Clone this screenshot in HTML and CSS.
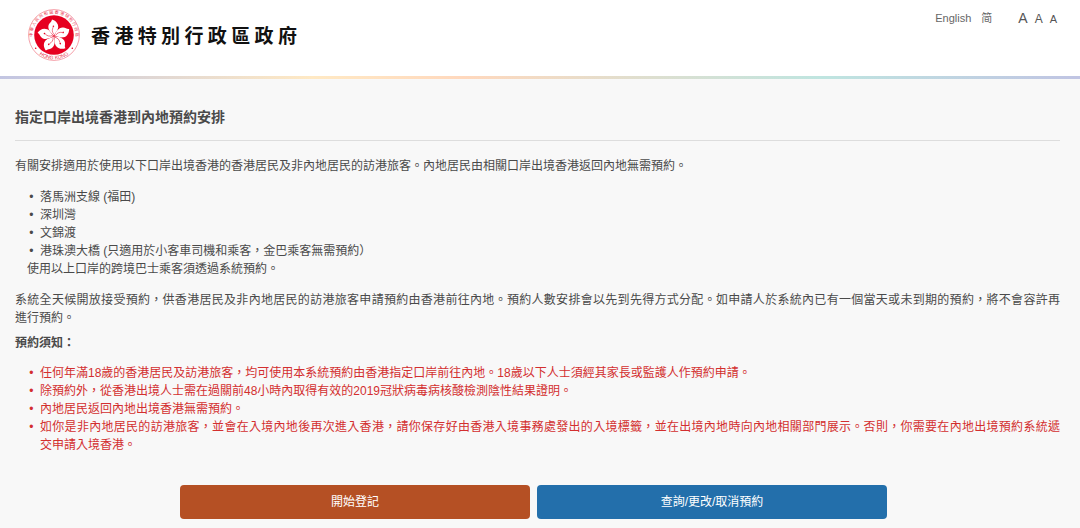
FILE: index.html
```html
<!DOCTYPE html>
<html lang="zh-Hant-HK">
<head>
<meta charset="utf-8">
<meta name="viewport" content="width=device-width, initial-scale=1">
<title>指定口岸出境香港到內地預約安排</title>
<link rel="stylesheet" href="styles.css">
</head>
<body>
<header class="site-header">
  <div class="brand">
    <svg class="emblem" viewBox="-26 -26 52 52" role="img" aria-label="香港特別行政區區徽">
      <defs>
        <path id="ring-top" d="M-15.2 15.2A21.5 21.5 0 1 1 15.2 15.2"/>
        <path id="ring-bottom" d="M-17 17.4A24.4 24.4 0 0 0 17 17.4"/>
        <g id="petal">
          <path d="M0 -.6C-3.4 -2.6 -7 -7.4 -5.2 -11.4C-4.2 -13.6 -2.4 -14.2 -2 -16.6C1.2 -15.6 4.6 -12.8 4.2 -8.6C3.8 -5 1.2 -3.6 0 -.6Z" fill="#fff"/>
          <path d="M0 -1.6C-2 -4 -2.2 -6.2 -.8 -9" fill="none" stroke="#e60020" stroke-width=".5"/>
          <circle cx="-.6" cy="-9.8" r=".8" fill="#e60020"/>
        </g>
      </defs>
      <circle r="25.4" fill="#fff" stroke="#f28a96" stroke-width=".8"/>
      <circle r="19.8" fill="#e60020"/>
      <g transform="translate(0 1)">
        <use href="#petal"/>
        <use href="#petal" transform="rotate(72)"/>
        <use href="#petal" transform="rotate(144)"/>
        <use href="#petal" transform="rotate(216)"/>
        <use href="#petal" transform="rotate(288)"/>
      </g>
      <text class="emblem-zh"><textPath href="#ring-top" startOffset="50%">中 華 人 民 共 和 國 香 港 特 別 行 政 區</textPath></text>
      <text class="emblem-en"><textPath href="#ring-bottom" startOffset="50%">HONG KONG</textPath></text>
      <g fill="#e60020"><circle cx="-18.3" cy="13.2" r=".8"/><circle cx="18.3" cy="13.2" r=".8"/></g>
    </svg>
    <span class="brand-name">香港特別行政區政府</span>
  </div>
  <nav class="tools">
    <a href="#">English</a>
    <a href="#" lang="zh-Hans">简</a>
    <div class="text-size">
      <button type="button" class="size-large" aria-label="大字體">A</button>
      <button type="button" class="size-medium" aria-label="中字體">A</button>
      <button type="button" class="size-small" aria-label="小字體">A</button>
    </div>
  </nav>
</header>
<main class="content">
  <h1 class="title">指定口岸出境香港到內地預約安排</h1>
  <p class="intro">有關安排適用於使用以下口岸出境香港的香港居民及非內地居民的訪港旅客。內地居民由相關口岸出境香港返回內地無需預約。</p>
  <ul class="list">
    <li>落馬洲支線 (福田)</li>
    <li>深圳灣</li>
    <li>文錦渡</li>
    <li>港珠澳大橋 (只適用於小客車司機和乘客，金巴乘客無需預約）</li>
  </ul>
  <p class="list-note">使用以上口岸的跨境巴士乘客須透過系統預約。</p>
  <p class="system">系統全天候開放接受預約，供香港居民及非內地居民的訪港旅客申請預約由香港前往內地。預約人數安排會以先到先得方式分配。如申請人於系統內已有一個當天或未到期的預約，將不會容許再<span class="keep">進行預約。</span></p>
  <h2 class="subtitle">預約須知：</h2>
  <ul class="list notice">
    <li>任何年滿18歲的香港居民及訪港旅客，均可使用本系統預約由香港指定口岸前往內地。18歲以下人士須經其家長或監護人作預約申請。</li>
    <li>除預約外，從香港出境人士需在過關前48小時內取得有效的2019冠狀病毒病核酸檢測陰性結果證明。</li>
    <li>內地居民返回內地出境香港無需預約。</li>
    <li>如你是非內地居民的訪港旅客，並會在入境內地後再次進入香港，請你保存好由香港入境事務處發出的入境標籤，並在出境內地時向內地相關部門展示。否則，你需要在內地出境預約系統遞<span class="keep">交申請入境香港。</span></li>
  </ul>
  <div class="actions">
    <button type="button" class="action action-start">開始登記</button>
    <button type="button" class="action action-manage">查詢/更改/取消預約</button>
  </div>
</main>
</body>
</html>
```
FILE: styles.css
```css
* {
  box-sizing: border-box;
}

body {
  margin: 0;
  background: #f8f8f8;
  color: #4a4a4a;
  font: 12px/18px "Liberation Sans", "Noto Sans CJK TC", sans-serif;
}

button {
  margin: 0;
  border: 0;
  font-family: inherit;
  cursor: pointer;
}

.site-header {
  display: flex;
  justify-content: space-between;
  align-items: flex-start;
  padding: 9px 23px 15px 28px;
  background: #fff;
  border-bottom: 3px solid;
  border-image: linear-gradient(90deg, #c2c5e2 0%, #ffe9c4 29%, #ffd8bd 43%, #bfe5e0 76%, #c0c4e3 100%) 1;
}

.brand {
  display: flex;
  align-items: center;
  gap: 11px;
}

.emblem {
  width: 52px;
  height: 52px;
}

.emblem-zh,
.emblem-en {
  fill: #e8304a;
  font-size: 4px;
  text-anchor: middle;
}

.emblem-en {
  font-size: 5px;
}

.brand-name {
  width: 206px;
  padding-top: 3px;
  color: #111;
  font-size: 19px;
  font-weight: 700;
  line-height: 30px;
  text-align: justify;
  text-align-last: justify;
}

.tools {
  display: flex;
  align-items: center;
  gap: 10px;
  font-size: 11px;
}

.tools a {
  color: #666;
  text-decoration: none;
}

.text-size {
  display: flex;
  align-items: baseline;
  gap: 7px;
  margin-left: 16px;
}

.text-size button {
  padding: 0;
  background: none;
  color: #555;
}

.text-size .size-large {
  font-size: 14px;
}

.text-size .size-medium {
  font-size: 12px;
}

.text-size .size-small {
  font-size: 11px;
}

.content {
  padding: 28px 20px 9px 15px;
}

.title {
  margin: 0 0 16px;
  padding-bottom: 13px;
  border-bottom: 1px solid #ddd;
  font-size: 14px;
  line-height: 20px;
}

.intro {
  margin: 0 0 13px;
}

.list {
  margin: 0;
  padding-left: 25px;
  list-style-type: "•  ";
  text-align: justify;
}

.list-note {
  margin: 0 0 13px;
  padding-left: 12px;
}

.system {
  margin: 0 0 7px;
  text-align: justify;
}

.keep {
  white-space: nowrap;
}

.subtitle {
  margin: 0 0 12px;
  font-size: 12px;
}

.notice {
  color: #d32f2f;
}

.actions {
  display: flex;
  justify-content: center;
  gap: 7px;
  margin-top: 31px;
  padding-right: 8px;
}

.action {
  flex: 0 1 350px;
  padding: 8px;
  border-radius: 4px;
  color: #fff;
  font-size: 12px;
  line-height: 18px;
}

.action-start {
  background: #b55024;
}

.action-manage {
  background: #236fab;
}
```
